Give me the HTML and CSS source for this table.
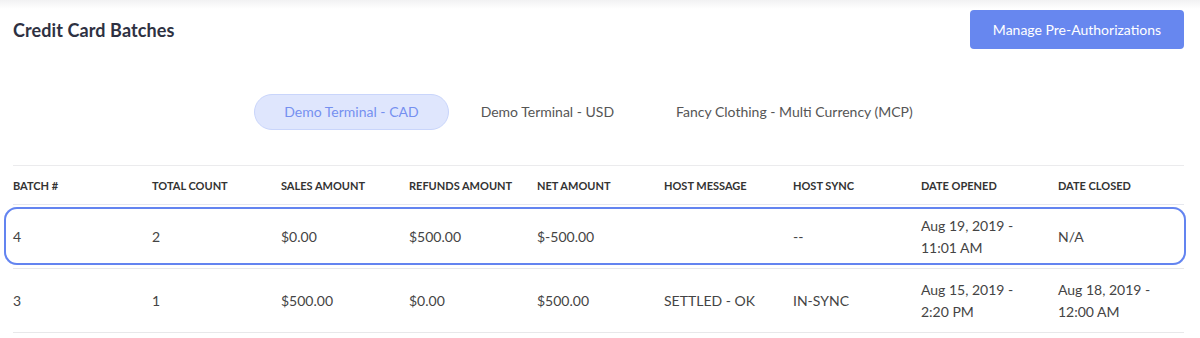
FILE: index.html
```html
<!DOCTYPE html>
<html>
<head>
<meta charset="utf-8">
<link rel="stylesheet" href="styles.css">
</head>
<body>
<div class="page">
  <div class="header">
    <h1 class="title">Credit Card Batches</h1>
    <button class="btn-primary">Manage Pre-Authorizations</button>
  </div>
  <div class="tabs">
    <div class="tab active">Demo Terminal - CAD</div>
    <div class="tab">Demo Terminal - USD</div>
    <div class="tab">Fancy Clothing - Multi Currency (MCP)</div>
  </div>
  <table class="batches">
    <colgroup>
      <col class="c1"><col class="c2"><col class="c3"><col class="c4"><col class="c5"><col class="c6"><col class="c7"><col class="c8"><col class="c9">
    </colgroup>
    <thead>
      <tr>
        <th>Batch #</th><th>Total Count</th><th>Sales Amount</th><th>Refunds Amount</th><th>Net Amount</th><th>Host Message</th><th>Host Sync</th><th>Date Opened</th><th>Date Closed</th>
      </tr>
    </thead>
    <tbody>
      <tr class="selected">
        <td class="first">4</td><td>2</td><td>$0.00</td><td>$500.00</td><td>$-500.00</td><td></td><td>--</td><td>Aug 19, 2019 -<br>11:01 AM</td><td>N/A</td>
      </tr>
      <tr>
        <td>3</td><td>1</td><td>$500.00</td><td>$0.00</td><td>$500.00</td><td>SETTLED - OK</td><td>IN-SYNC</td><td>Aug 15, 2019 -<br>2:20 PM</td><td>Aug 18, 2019 -<br>12:00 AM</td>
      </tr>
    </tbody>
  </table>
</div>
</body>
</html>
```

FILE: styles.css
```css
* { box-sizing: border-box; }
html, body {
  margin: 0;
  padding: 0;
}
body {
  background: linear-gradient(#f2f2f3 0px, #ffffff 9px) no-repeat, #ffffff;
  font-family: Lato, "Open Sans", sans-serif;
  color: #444;
}
.page {
  padding: 10px 16px 0 13px;
}
.header {
  display: flex;
  justify-content: space-between;
  align-items: center;
  height: 39px;
}
.title {
  margin: 0;
  font-size: 18px;
  font-weight: 700;
  color: #2e3142;
  letter-spacing: 0.1px;
}
.btn-primary {
  width: 214px;
  height: 39px;
  border: none;
  border-radius: 4px;
  background: #6787ef;
  color: #fff;
  font-family: Lato, sans-serif;
  font-size: 14px;
  padding: 0;
}
.tabs {
  display: flex;
  justify-content: center;
  gap: 2px;
  margin-top: 45px;
}
.tab {
  height: 36px;
  line-height: 34px;
  padding: 0 29px;
  border: 1px solid transparent;
  border-radius: 18px;
  font-size: 14px;
  color: #555;
  white-space: nowrap;
}
.tab.active {
  background: #dfe6fd;
  border-color: #c9d5fb;
  color: #7590f0;
}
.batches {
  margin-top: 35px;
  width: 1171px;
  border-collapse: collapse;
  table-layout: fixed;
  border-top: 1px solid #ebebed;
}
.c1 { width: 139px; }
.c2 { width: 129px; }
.c3 { width: 128px; }
.c4 { width: 128px; }
.c5 { width: 127px; }
.c6 { width: 129px; }
.c7 { width: 128px; }
.c8 { width: 137px; }
.c9 { width: 126px; }
.batches th {
  height: 39px;
  text-align: left;
  font-size: 11px;
  font-weight: 700;
  text-transform: uppercase;
  color: #333;
  padding: 0;
  border-bottom: 1px solid #e6e8ef;
  white-space: nowrap;
}
.batches td {
  height: 64px;
  padding: 0;
  font-size: 14px;
  line-height: 22px;
  color: #444;
  border-bottom: 1px solid #e8e8ea;
  vertical-align: middle;
}
.batches tr.selected td.first {
  position: relative;
}
.batches tr.selected td.first::after {
  content: "";
  position: absolute;
  top: 2px;
  bottom: 3px;
  left: -9px;
  width: 1178px;
  border: 2px solid #6384f0;
  border-radius: 13px;
  box-shadow: 0 0 0.5px #6384f0;
  pointer-events: none;
}
```
